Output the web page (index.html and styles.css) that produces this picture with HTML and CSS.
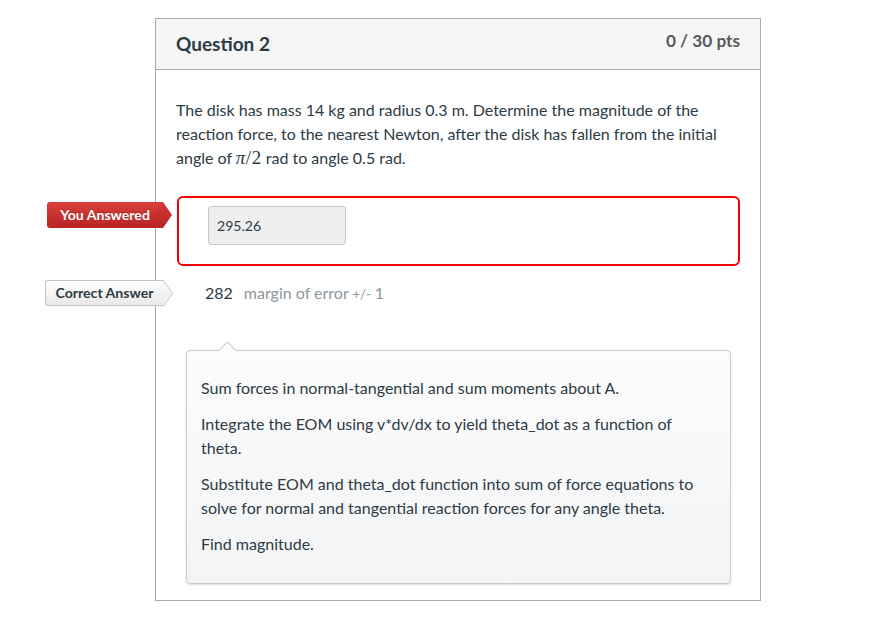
FILE: index.html
```html
<!DOCTYPE html>
<html>
<head>
<meta charset="utf-8">
<link rel="stylesheet" href="styles.css">
</head>
<body>
<div class="card">
  <div class="card-header">
    <h2 class="title">Question 2</h2>
    <span class="pts">0 / 30 pts</span>
  </div>
  <div class="card-body">
    <p class="question">The disk has mass 14 kg and radius 0.3 m. Determine the magnitude of the reaction force, to the nearest Newton, after the disk has fallen from the initial angle of <span class="math"><i>π</i>/2</span> rad to angle 0.5 rad.</p>

    <div class="answer-row wrong">
      <span class="flag flag-red">You Answered</span>
      <div class="answer-box">
        <div class="answer-input">295.26</div>
      </div>
    </div>

    <div class="answer-row correct">
      <span class="flag flag-gray">Correct Answer</span>
      <div class="correct-value">
        <span class="num">282</span>
        <span class="margin">margin of error <small>+/-</small> 1</span>
      </div>
    </div>

    <div class="comment">
      <p>Sum forces in normal-tangential and sum moments about A.</p>
      <p>Integrate the EOM using v*dv/dx to yield theta_dot as a function of theta.</p>
      <p>Substitute EOM and theta_dot function into sum of force equations to solve for normal and tangential reaction forces for any angle theta.</p>
      <p>Find magnitude.</p>
    </div>
  </div>
</div>
</body>
</html>
```

FILE: styles.css
```css
* { box-sizing: border-box; }
body {
  margin: 0;
  background: #fff;
  font-family: Lato, "Open Sans", "Liberation Sans", sans-serif;
  color: #2d3b45;
}
.card {
  margin: 18px 0 0 155px;
  width: 606px;
  height: 583px;
  border: 1px solid #aaaaaa;
}
.card-header {
  height: 51px;
  background: #f5f5f5;
  border-bottom: 1px solid #aaaaaa;
  display: flex;
  justify-content: space-between;
  padding: 0 20px;
}
.title {
  margin: 0;
  font-size: 19px;
  font-weight: 700;
  line-height: 50px;
  color: #2d3b45;
}
.pts {
  font-size: 17.2px;
  font-weight: 700;
  color: #555a5e;
  line-height: 20px;
  padding-top: 12px;
}
.card-body {
  padding: 28px 20px 0 20px;
}
.question {
  margin: 0;
  font-size: 16px;
  line-height: 24px;
}
.math {
  font-family: "Liberation Serif", "DejaVu Serif", serif;
  font-size: 19px;
  line-height: 1;
  letter-spacing: 0.5px;
}
.answer-row {
  position: relative;
}
.flag {
  position: absolute;
  z-index: 1;
  left: -129px;
  height: 26px;
  width: 116px;
  font-size: 14.1px;
  font-weight: 700;
  line-height: 26px;
  text-align: center;
  white-space: nowrap;
  border-radius: 3px 0 0 3px;
}
.flag::after {
  content: "";
  position: absolute;
  z-index: -1;
  top: 3.8px;
  left: calc(100% - 9.2px);
  width: 18.4px;
  height: 18.4px;
  transform: scaleX(0.69) rotate(45deg);
}
.flag-red {
  top: 6px;
  color: #fff;
  background: linear-gradient(#d9403d, #b82323);
  text-shadow: 0 -1px 0 rgba(0,0,0,0.2);
}
.flag-red::after {
  background: linear-gradient(135deg, #d43936, #b82323);
}
.flag-gray {
  top: 0;
  left: -131px;
  width: 118px;
  color: #2d3b45;
  background: linear-gradient(#ffffff, #e9e9e9);
  border: 1px solid #c4c4c4;
  border-right: none;
  line-height: 24px;
}
.flag-gray::after {
  top: 2.8px;
  background: linear-gradient(135deg, #fafafa, #ebebeb);
  border-top: 1px solid #c4c4c4;
  border-right: 1px solid #c4c4c4;
}
.answer-row.wrong {
  margin-top: 26px;
}
.answer-box {
  margin-left: 1px;
  width: 563px;
  height: 70px;
  border: 2px solid #f40000;
  border-radius: 6px;
  padding: 8px 29px;
}
.answer-input {
  width: 138px;
  height: 39px;
  background: #efefef;
  border: 1px solid #c8c8c8;
  border-radius: 3px;
  font-size: 14.1px;
  line-height: 37px;
  padding-left: 8px;
  color: #2d3b45;
}
.answer-row.correct {
  margin-top: 14px;
  height: 26px;
}
.correct-value {
  padding-left: 29px;
  line-height: 26px;
  display: flex;
  align-items: baseline;
  gap: 11px;
}
.num {
  font-size: 16px;
  color: #2d3b45;
}
.margin {
  font-size: 16px;
  color: #8b969e;
}
.margin small {
  font-size: 13px;
}
.comment {
  position: relative;
  margin: 44px 0 0 10px;
  width: 545px;
  height: 234px;
  background: linear-gradient(#fcfcfd, #f3f4f5);
  border: 1px solid #c7cdd1;
  border-radius: 4px;
  box-shadow: 0 1px 2px rgba(0,0,0,0.15);
  padding: 13px 14px 0 14px;
}
.comment::before {
  content: "";
  position: absolute;
  top: -7px;
  left: 34px;
  width: 12px;
  height: 12px;
  background: #fcfcfd;
  border-top: 1px solid #c7cdd1;
  border-left: 1px solid #c7cdd1;
  transform: rotate(45deg);
}
.comment p {
  margin: 12px 0;
  font-size: 16px;
  line-height: 24px;
  color: #2d3b45;
}
```
